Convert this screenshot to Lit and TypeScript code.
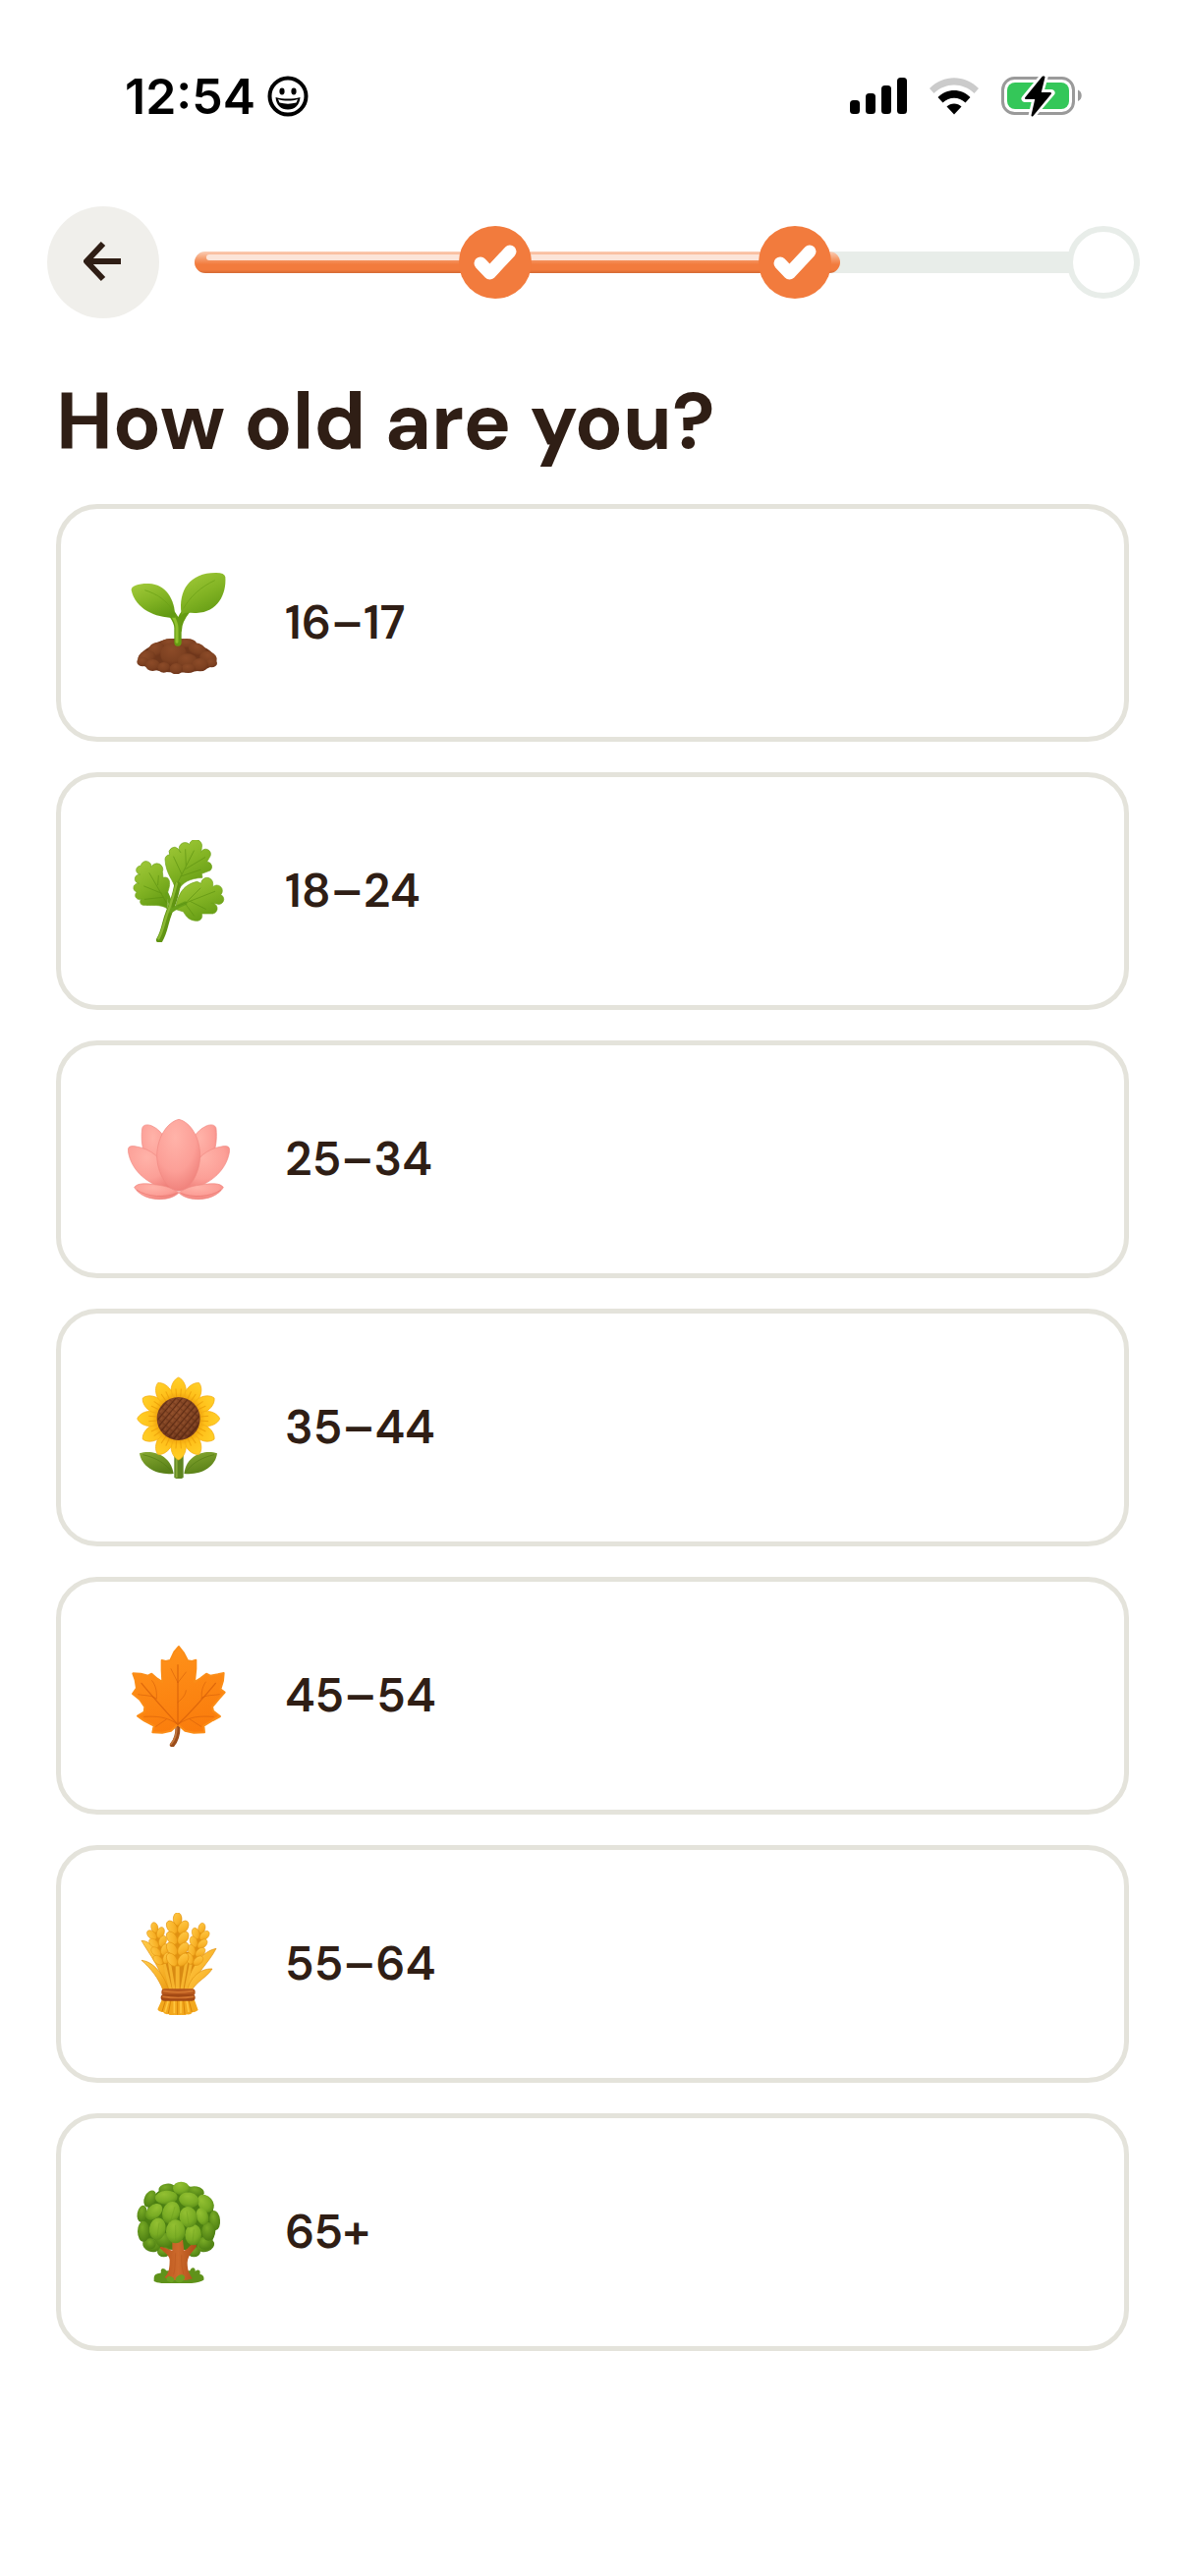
import { LitElement, html, css, svg, SVGTemplateResult } from 'lit';
import { customElement, state } from 'lit/decorators.js';
import { classMap } from 'lit/directives/class-map.js';

interface AgeOption {
	label: string;
	viewBox: string;
	art: () => SVGTemplateResult;
}

type Blob = [cx: number, cy: number, rx: number, ry: number, turn: number];

const blobs = (items: Blob[], fill: string) => items.map(([cx, cy, rx, ry, turn]) => svg`
	<ellipse cx=${cx} cy=${cy} rx=${rx} ry=${ry} fill=${fill} transform=${`rotate(${turn} ${cx} ${cy})`}></ellipse>`);

const seedling = () => svg`
	<path d="M92 330C100 305 130 295 150 282C170 268 250 262 272 288C300 296 328 315 330 335C325 365 270 372 210 374C150 372 95 360 92 330Z" fill="#6f371b"></path>
	${blobs([
		[190, 285, 30, 15, 0], [240, 285, 30, 15, 0], [148, 303, 26, 21, -20], [272, 303, 28, 19, 20],
		[118, 328, 28, 21, -20], [306, 330, 27, 21, 20], [200, 318, 40, 36, 0], [242, 338, 30, 22, 0],
		[106, 341, 18, 14, 0], [316, 345, 17, 13, 0], [136, 351, 22, 18, 0], [281, 350, 25, 20, 0],
		[170, 358, 19, 16, 0], [245, 361, 22, 14, 0], [208, 362, 20, 17, 0],
	], 'url(#earth)')}
	<path d="M213 282V238C213 222 206 210 196 196M214 245C214 222 224 204 240 184" fill="none" stroke="#659b12" stroke-width="22" stroke-linecap="round"></path>
	<path d="M210 280V236C210 222 204 212 197 200" fill="none" stroke="#8fc02c" stroke-width="9" stroke-linecap="round"></path>
	<path d="M204 206C150 208 84 182 71 122C69 108 96 101 125 102C175 104 206 150 204 206Z" fill="url(#leaf)"></path>
	<path d="M224 194C214 122 250 68 330 69Q356 69 358 82C362 136 334 190 270 192C246 193 234 187 222 200Z" fill="url(#leaf)"></path>
	<path d="M112 122C150 134 180 154 200 188M326 92C284 112 252 140 230 178" fill="none" stroke="#6b9f16" stroke-width="3" opacity="0.7"></path>`;

const herb = () => svg`
	<g fill="url(#leaf)" stroke="#6fa31c" stroke-width="2" stroke-linejoin="round">
		<path d="M204 222C202 200 176 180 174 134A14 14 0 0 1 188 120A16 16 0 0 1 214 102L222 114A17 17 0 0 1 248 88A17 17 0 0 1 286 98L284 112A15 15 0 0 1 312 124L302 142A15 15 0 0 1 312 168L286 178L288 190C250 192 228 204 216 226Z"></path>
		<path d="M180 284C160 270 130 276 106 274A11 11 0 0 1 103 254A12 12 0 0 1 88 234A13 13 0 0 1 94 208A14 14 0 0 1 98 180A11 11 0 0 1 100 154A16 16 0 0 1 132 158A17 17 0 0 1 166 172L168 190C188 184 192 206 184 228C176 250 186 268 180 284Z"></path>
		<path d="M204 286C214 250 220 214 272 202L284 208A18 18 0 0 1 320 208L320 218A15 15 0 0 1 344 242A15 15 0 0 1 332 270L314 268A14 14 0 0 1 320 300L286 300A16 16 0 0 1 274 322C250 322 240 312 230 294Z"></path>
	</g>
	<path d="M157 380C174 352 172 330 186 296C196 274 204 252 212 212" fill="none" stroke="#609412" stroke-width="20" stroke-linecap="round"></path>
	<path d="M190 292C192 270 184 248 180 240M196 290C208 280 220 274 236 268" fill="none" stroke="#68a01a" stroke-width="11" stroke-linecap="round"></path>
	<path d="M154 376C168 352 170 328 182 296C194 266 200 240 210 206" fill="none" stroke="#8ab832" stroke-width="7" stroke-linecap="round"></path>
	<g fill="none" stroke="#5b9010" stroke-width="3" stroke-linecap="round" opacity="0.6">
		<path d="M212 206L262 108M224 178L200 126M236 164L296 128M222 186L282 166M238 154L236 104"></path>
		<path d="M178 266L126 176M164 238L110 216M168 250L112 256M152 212L154 184"></path>
		<path d="M214 276L326 232M242 262L282 222M250 262L298 286M236 270L262 306"></path>
	</g>`;

const lotus = () => svg`
	<g fill="url(#petal)" stroke="#f08a82" stroke-width="2">
		<path d="M168 262C120 236 96 180 104 116C106 104 120 102 134 108C168 124 182 158 186 180Z"></path>
		<path d="M266 262C314 236 336 180 330 116C328 104 314 102 300 108C266 124 250 158 246 180Z"></path>
		<path d="M200 306C130 294 70 250 61 184C60 170 70 168 86 171C130 178 166 206 178 250Z"></path>
		<path d="M232 306C302 294 362 250 371 184C372 170 362 168 346 171C302 178 268 206 254 250Z"></path>
		<path d="M80 296C90 280 120 284 150 288C180 292 200 300 216 312C190 340 110 342 80 296Z"></path>
		<path d="M352 296C342 280 312 284 282 288C252 292 232 300 216 312C242 340 322 342 352 296Z"></path>
		<path d="M216 88C250 96 280 140 281 200C280 252 250 304 216 307C180 304 150 252 149 200C150 140 182 96 216 88Z"></path>
	</g>
	<path d="M88 304C120 326 176 328 208 314M344 304C312 326 256 328 224 314" fill="none" stroke="#e9766f" stroke-width="3" stroke-linecap="round" opacity="0.7"></path>`;

const sunflower = () => svg`
	<path d="M202 300H230V372Q216 381 202 372Z" fill="#5d8420"></path>
	<path d="M209 306V372" stroke="#86a83a" stroke-width="6"></path>
	<path d="M200 360C150 366 102 340 96 298C130 286 190 298 200 360Z" fill="url(#olive)"></path>
	<path d="M232 360C282 366 328 340 333 298C300 286 240 298 232 360Z" fill="url(#olive)"></path>
	<path d="M106 302C150 312 176 330 196 356M324 302C280 312 256 330 236 356" fill="none" stroke="#577d16" stroke-width="3" opacity="0.7"></path>
	${Array.from({ length: 12 }, (_, i) => svg`
		<g transform=${`rotate(${i * 30} 215 192)`}>
			<path d="M215 66C230 72 239 92 238 110L228 142H202L192 110C191 92 200 72 215 66Z" fill="url(#gold)" stroke="#f3ab10" stroke-width="2"></path>
			<path d="M209 126L207 102M221 126L223 102" stroke="#e89a06" stroke-width="3" stroke-linecap="round" opacity="0.7"></path>
		</g>`)}
	<circle cx="215" cy="192" r="66" fill="url(#earth)"></circle>
	<circle cx="215" cy="192" r="64" fill="url(#seeds)"></circle>`;

const maple = () => svg`
	<path d="M213 316C214 345 208 365 196 378" fill="none" stroke="#9a4c1a" stroke-width="15" stroke-linecap="round"></path>
	<path d="M209 326C210 348 202 364 192 376" fill="none" stroke="#c4793f" stroke-width="5" stroke-linecap="round"></path>
	<path d="M216 78L230 96L243 121L256 123L268 119L268 146L264 186L282 175L300 161L312 167L335 163L353 159L351 182L343 208L356 218L338 238L318 262L321 275L342 291L320 303L292 320L294 340L262 341L235 335L213 316L192 335L165 341L136 340L140 320L110 304L90 290L110 278L112 262L97 240L75 222L87 205L83 180L76 160L100 161L122 167L133 161L150 176L166 186L164 150L164 120L176 123L190 120L202 94Z"
		fill="url(#autumn)" stroke="#fb8d17" stroke-width="6" stroke-linejoin="round"></path>
	<g fill="none" stroke="#d65f0a" stroke-linecap="round">
		<path d="M213 318V134M213 316C180 280 140 236 102 190M213 316C250 280 290 236 328 190" stroke-width="4" opacity="0.75"></path>
		<path d="M213 316C180 292 150 290 110 292M213 316C250 290 280 290 322 292M213 188L192 146M213 188L238 156M213 248C228 236 236 226 238 212M146 236C134 226 110 228 92 224M148 238C150 212 144 194 134 182M284 236C300 224 320 228 340 224M286 234C284 212 290 198 298 186M178 300L146 322M250 300L284 322" stroke-width="3" opacity="0.6"></path>
	</g>`;

// ears of grain: x, y of the bottom pair, tilt, number of pairs and scale
const ear = (x: number, y: number, turn: number, pairs: number, size: number) => svg`
	<g transform=${`translate(${x} ${y}) rotate(${turn}) scale(${size})`} stroke="#e3940f" stroke-width="2">
		<path d=${`M0 20V${pairs * -33}`} stroke="#e09012" stroke-width="22"></path>
		<ellipse cx="0" cy=${pairs * -33 + 8} rx="13" ry="20" fill="url(#grain)"></ellipse>
		${Array.from({ length: pairs }, (_, i) => (i - pairs + 1) * -33).reverse().map((_, i) => svg`
			<ellipse cx="-17" cy=${(pairs - 1 - i) * -33} rx="14" ry="22" transform=${`rotate(-34 -17 ${(pairs - 1 - i) * -33})`} fill="url(#grain)"></ellipse>
			<ellipse cx="17" cy=${(pairs - 1 - i) * -33} rx="14" ry="22" transform=${`rotate(34 17 ${(pairs - 1 - i) * -33})`} fill="url(#grain)"></ellipse>`)}
	</g>`;

const wheat = () => svg`
	<path d="M150 170H276L250 292H178Z" fill="#d98a12"></path>
	<g fill="url(#grain)" stroke="#df8f0d" stroke-width="2">
		<path d="M102 136C135 136 164 178 194 286L174 276C160 220 128 180 102 136Z"></path>
		<path d="M102 196C140 200 170 240 186 288H168C154 250 130 220 102 196Z"></path>
		<path d="M330 160C290 168 252 210 234 290H250C266 236 308 204 330 160Z"></path>
		<path d="M318 222C280 220 250 250 240 290H254C270 260 300 250 318 222Z"></path>
	</g>
	<g stroke="#f6b42d" stroke-width="9">
		<path d="M170 200L192 290M254 200L236 290M186 196L202 290M240 196L224 290"></path>
		<path d="M212 200V290" stroke-width="12"></path>
	</g>
	${ear(166, 192, -14, 4, 0.8)}
	${ear(262, 194, 14, 4, 0.8)}
	${ear(212, 194, 0, 4, 1)}
	<path d="M166 312H262L275 348Q265 356 258 354Q252 364 240 361Q232 368 224 362Q212 370 202 362Q192 368 184 360Q172 362 168 354Q156 356 151 346Z" fill="#f3a81d"></path>
	<path d="M176 316L165 352M192 316L184 358M212 316V362M230 316L234 360M246 316L256 354" stroke="#d98509" stroke-width="3"></path>
	<path d="M184 318L174 354M202 318V358M222 318V358M240 318L246 354" stroke="#ffc63f" stroke-width="5"></path>
	<rect x="163" y="283" width="103" height="21" rx="10" fill="#b4561c"></rect>
	<rect x="161" y="300" width="105" height="20" rx="10" fill="#a34914"></rect>
	<path d="M170 290Q214 297 258 290M168 307Q214 314 260 307" fill="none" stroke="#d2742e" stroke-width="5" stroke-linecap="round"></path>`;

const tree = () => svg`
	<path d="M120 150C130 90 180 70 224 72C280 76 320 120 326 170C336 220 320 260 284 266C250 272 180 272 140 264C100 250 96 190 120 150Z" fill="#4b7f12"></path>
	${blobs([[170, 276, 20, 16, 0], [262, 276, 20, 16, 0], [132, 256, 27, 20, 20], [298, 256, 27, 20, -20]], 'url(#shade)')}
	<path d="M140 358C140 342 152 344 162 340C158 326 170 322 178 334L250 334C254 320 268 322 266 336C274 328 284 332 280 344C290 346 294 352 292 362C270 378 160 378 140 366Z" fill="#5f921a"></path>
	<path d="M196 240H228L232 272C246 268 250 252 262 252C276 254 268 264 260 272C248 286 242 296 242 310C242 334 250 348 258 358C236 366 194 366 172 354C186 344 188 322 188 300C186 284 168 276 158 264C162 256 174 264 182 268L196 272Z" fill="url(#bark)"></path>
	<path d="M206 280C204 304 206 326 200 346M224 286C223 310 226 328 231 346" fill="none" stroke="#b4521c" stroke-width="2" opacity="0.6"></path>
	${blobs([
		[180, 84, 26, 16, -8], [268, 92, 26, 16, 12], [128, 114, 17, 27, 25], [104, 160, 15, 26, 10], [326, 180, 16, 30, -6],
		[170, 240, 26, 22, 10], [296, 250, 22, 20, 0], [108, 214, 18, 32, 0], [306, 214, 20, 28, 0], [130, 252, 16, 16, 0],
	], 'url(#shade)')}
	${blobs([
		[223, 82, 25, 20, 0], [298, 128, 22, 30, -40], [260, 224, 25, 32, 0], [288, 168, 18, 27, -20],
		[178, 110, 34, 21, -3], [247, 118, 31, 23, 12], [140, 154, 20, 30, 48], [192, 156, 26, 34, 20], [245, 170, 27, 32, -12],
		[151, 206, 25, 34, 8], [206, 214, 29, 36, 0],
	], 'url(#crown)')}
	<path d="M190 186L204 138M206 240V194M150 230L156 188M246 192L240 152M258 246L262 208" stroke="#64981a" stroke-width="2" opacity="0.5"></path>
	${blobs([[220, 358, 15, 11, -30], [190, 360, 12, 9, 20]], '#6c9f20')}`;

const AGES: AgeOption[] = [
	{ label: '16–17', viewBox: '60 66 312 312', art: seedling },
	{ label: '18–24', viewBox: '60 75 312 312', art: herb },
	{ label: '25–34', viewBox: '60 54 312 312', art: lotus },
	{ label: '35–44', viewBox: '60 63 312 312', art: sunflower },
	{ label: '45–54', viewBox: '60 72 312 312', art: maple },
	{ label: '55–64', viewBox: '60 51 312 312', art: wheat },
	{ label: '65+', viewBox: '60 60 312 312', art: tree },
];

@customElement('status-bar')
export class StatusBar extends LitElement {

	render() {
		return html`
			<div class="side">
				<span class="time">12:54</span>
				<svg width="42" height="42" viewBox="0 0 42 42" aria-hidden="true">
					<circle cx="21" cy="21" r="18.5" fill="none" stroke="#000" stroke-width="4"></circle>
					<ellipse cx="15" cy="16" rx="2.6" ry="3.4"></ellipse>
					<ellipse cx="27" cy="16" rx="2.6" ry="3.4"></ellipse>
					<path d="M8.500 22C16 24 26 24 33.500 22C33 30 28 34.500 21 34.500S9 30 8.500 22Z"></path>
					<path d="M11 24C17 26 25 26 31 24L29.500 27.500C24 29 18 29 12.500 27.500Z" fill="#fff"></path>
				</svg>
			</div>
			<div class="side icons">
				<svg width="58" height="38" viewBox="0 0 58 38" aria-hidden="true">
					<rect x="0" y="23" width="10" height="14" rx="3.5"></rect>
					<rect x="16" y="16" width="10" height="21" rx="3.5"></rect>
					<rect x="32" y="8" width="10" height="29" rx="3.5"></rect>
					<rect x="48" y="0" width="10" height="37" rx="3.5"></rect>
				</svg>
				<svg width="52" height="38" viewBox="0 0 52 38" aria-hidden="true">
					<path d="M1 11C15-3.500 37-3.500 51 11L46.500 16C35 4.500 17 4.500 5.500 16Z" fill="#cbcbcb"></path>
					<path d="M9.500 20C18.500 10.500 33.500 10.500 42.500 20L37.500 25.500C31 19 21 19 14.500 25.500Z"></path>
					<path d="M18.500 29.500C22.500 25.500 29.500 25.500 33.500 29.500L26 37.500Z"></path>
				</svg>
				<svg width="83" height="42" viewBox="0 0 83 42" aria-hidden="true">
					<rect x="1.5" y="2.5" width="72" height="36" rx="12" fill="#fff" stroke="#9a9a9a" stroke-width="3"></rect>
					<path d="M78 14.500C83 16.500 83 24 78 26Z" fill="#9a9a9a"></path>
					<rect x="6" y="7" width="63" height="27" rx="8" fill="#34c759"></rect>
					<path d="M42.500 1L24 23.500H35L31 41L51 17.500H39.500L44 1.500Z" stroke="#fff" stroke-width="7" stroke-linejoin="round" fill="#fff"></path>
					<path d="M42.500 1.500L25 23H35.500L31.500 40.500L50 18H39.500L43.500 1.500Z" stroke="#000" stroke-width="2" stroke-linejoin="round"></path>
				</svg>
			</div>`;
	}

	static styles = css`

		:host {
			display: flex;
			align-items: center;
			justify-content: space-between;
			height: 196px;
			padding: 0 104px 0 127px;
			color: #000;
			font-family: Inter, "Liberation Sans", sans-serif;
		}

		svg {
			display: block;
		}

		.side {
			display: flex;
			align-items: center;
			gap: 12px;
		}

		.icons {
			gap: 22px;
		}

		.time {
			font-size: 50px;
			font-weight: 600;
			line-height: 60px;
		}
	`;
}

@customElement('step-progress')
export class StepProgress extends LitElement {

	static properties = {
		value: { type: Number },
		steps: { attribute: false },
	};

	declare value: number;
	declare steps: number[];

	constructor() {
		super();
		this.value = 0;
		this.steps = [];
	}

	renderStep(at: number) {
		const done = at <= this.value;
		return html`
			<span class=${classMap({ step: true, done })} style="left: ${at}%">
				${done ? html`
					<svg width="74" height="74" viewBox="0 0 74 74" aria-hidden="true">
						<path d="M22 38L31.500 48L52 26" fill="none" stroke="#fff" stroke-width="13" stroke-linecap="round" stroke-linejoin="round"></path>
					</svg>` : ''}
			</span>`;
	}

	render() {
		return html`
			<div class="track" role="progressbar" aria-label="Progress" aria-valuenow=${this.value} aria-valuemin="0" aria-valuemax="100">
				<div class="fill" style="width: ${this.value}%"></div>
				${this.steps.map(at => this.renderStep(at))}
			</div>`;
	}

	static styles = css`

		:host {
			display: block;
		}

		.track {
			position: relative;
			height: 22px;
			border-radius: 11px;
			background: #e8ede9;
		}

		.fill {
			box-sizing: border-box;
			height: 22px;
			padding: 3px 12px;
			border-radius: 11px;
			background: linear-gradient(#fbcdb5, #f4935f 40%, #f27b3d 60%, #f27b3d 85%, #d36a35);
		}

		.fill::before {
			content: "";
			display: block;
			height: 6px;
			border-radius: 3px;
			background: #fce4d8;
		}

		.step {
			position: absolute;
			top: 50%;
			box-sizing: border-box;
			width: 74px;
			height: 74px;
			border: 6px solid #e8ede9;
			border-radius: 50%;
			background: #fff;
			transform: translate(-50%, -50%);
		}

		.done {
			border: 0;
			background: #f27b3d;
		}

		.done svg {
			display: block;
		}
	`;
}

@customElement('app-root')
export class AppRoot extends LitElement {

	@state() private selected = '';

	clickOption(label: string) {
		this.selected = label;
	}

	// shared paints, used by all of the plant drawings
	renderPaints() {
		return html`
			<svg class="paints" width="0" height="0" aria-hidden="true">
				<defs>
					<linearGradient id="leaf" x1="0.2" y1="0" x2="0.7" y2="1">
						<stop offset="0" stop-color="#9fc838"></stop>
						<stop offset="0.5" stop-color="#83b424"></stop>
						<stop offset="1" stop-color="#629a13"></stop>
					</linearGradient>
					<linearGradient id="olive" x1="0" y1="0" x2="0.4" y2="1">
						<stop offset="0" stop-color="#87a932"></stop>
						<stop offset="1" stop-color="#5a8118"></stop>
					</linearGradient>
					<radialGradient id="earth" cx="0.42" cy="0.3" r="0.8">
						<stop offset="0" stop-color="#8c4b28"></stop>
						<stop offset="0.6" stop-color="#7d4121"></stop>
						<stop offset="1" stop-color="#672f16"></stop>
					</radialGradient>
					<radialGradient id="petal" cx="0.42" cy="0.25" r="0.8">
						<stop offset="0" stop-color="#ffb3a9"></stop>
						<stop offset="0.6" stop-color="#fc9f97"></stop>
						<stop offset="1" stop-color="#ee7d77"></stop>
					</radialGradient>
					<linearGradient id="gold" x1="0" y1="0" x2="0" y2="1">
						<stop offset="0" stop-color="#ffd028"></stop>
						<stop offset="0.6" stop-color="#ffc01a"></stop>
						<stop offset="1" stop-color="#e28f06"></stop>
					</linearGradient>
					<pattern id="seeds" width="17" height="15" patternUnits="userSpaceOnUse" patternTransform="rotate(-50)">
						<path d="M0 0H17" fill="none" stroke="#4e220e" stroke-width="6" opacity="0.7"></path>
						<path d="M0 0V15" fill="none" stroke="#4e220e" stroke-width="3" opacity="0.5"></path>
						<path d="M4 8H13" stroke="#a8643a" stroke-width="3" opacity="0.5"></path>
					</pattern>
					<linearGradient id="autumn" x1="0.3" y1="0" x2="0.6" y2="1">
						<stop offset="0" stop-color="#ff921a"></stop>
						<stop offset="1" stop-color="#fa7c0c"></stop>
					</linearGradient>
					<linearGradient id="grain" x1="0" y1="0" x2="1" y2="1">
						<stop offset="0" stop-color="#ffcb4a"></stop>
						<stop offset="0.6" stop-color="#f9b42a"></stop>
						<stop offset="1" stop-color="#e99a15"></stop>
					</linearGradient>
					<radialGradient id="crown" cx="0.4" cy="0.25" r="0.85">
						<stop offset="0" stop-color="#93c032"></stop>
						<stop offset="0.6" stop-color="#79ac24"></stop>
						<stop offset="1" stop-color="#528614"></stop>
					</radialGradient>
					<radialGradient id="shade" cx="0.4" cy="0.3" r="0.8">
						<stop offset="0" stop-color="#79ab26"></stop>
						<stop offset="1" stop-color="#487a10"></stop>
					</radialGradient>
					<linearGradient id="bark" x1="0" y1="0" x2="1" y2="0">
						<stop offset="0" stop-color="#b8541c"></stop>
						<stop offset="0.5" stop-color="#cd6a2c"></stop>
						<stop offset="1" stop-color="#ad4d19"></stop>
					</linearGradient>
				</defs>
			</svg>`;
	}

	renderOption(option: AgeOption) {
		const selected = option.label === this.selected;
		return html`
			<button class=${classMap({ option: true, selected })} aria-pressed=${selected} @click=${() => this.clickOption(option.label)}>
				<svg width="104" height="104" viewBox=${option.viewBox} aria-hidden="true">${option.art()}</svg>
				<span>${option.label}</span>
			</button>`;
	}

	render() {
		return html`
			${this.renderPaints()}
			<status-bar></status-bar>
			<header>
				<button class="back" aria-label="Back">
					<svg width="40" height="42" viewBox="0 0 40 42" aria-hidden="true">
						<path d="M38 20H4M20 2L3 20L20 38" fill="none" stroke="#2f1e15" stroke-width="6" stroke-linejoin="round"></path>
					</svg>
				</button>
				<step-progress .value=${68.3} .steps=${[31.8, 63.5, 96.2]}></step-progress>
			</header>
			<main>
				<h1>How old are you?</h1>
				<div class="options">${AGES.map(option => this.renderOption(option))}</div>
			</main>`;
	}

	static styles = css`

		:host {
			display: block;
			min-height: 100vh;
			background: #fff;
			color: #2f1e15;
			font-family: "DM Sans", Inter, "Liberation Sans", sans-serif;
		}

		.paints {
			position: absolute;
		}

		header {
			display: flex;
			align-items: center;
			gap: 36px;
			padding: 14px 46px 0 48px;
		}

		step-progress {
			flex: 1;
		}

		button {
			font: inherit;
			color: inherit;
			cursor: pointer;
		}

		.back {
			display: flex;
			align-items: center;
			justify-content: center;
			width: 114px;
			height: 114px;
			padding: 0;
			border: 0;
			border-radius: 50%;
			background: #f0efeb;
		}

		main {
			padding: 58px 57px;
		}

		h1 {
			margin: 0 0 35px;
			font-size: 81px;
			font-weight: 700;
			line-height: 96px;
		}

		.options {
			display: flex;
			flex-direction: column;
			gap: 31px;
		}

		.option {
			display: flex;
			align-items: center;
			gap: 56px;
			padding: 64px 68px;
			border: 5px solid #e4e3db;
			border-radius: 42px;
			background: #fff;
			font-size: 48px;
			font-weight: 600;
			line-height: 60px;
			text-align: left;
		}

		.selected {
			border-color: #f27b3d;
		}
	`;
}
